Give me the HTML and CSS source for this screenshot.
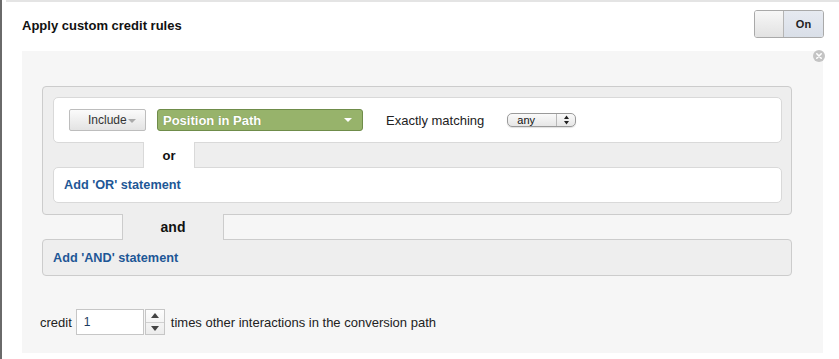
FILE: index.html
```html
<!DOCTYPE html>
<html>
<head>
<meta charset="utf-8">
<link rel="stylesheet" href="styles.css">
</head>
<body>
<div class="page">
  <div class="topbar"></div>
  <div class="header">
    <div class="title">Apply custom credit rules</div>
    <div class="toggle"><span class="toggle-knob"></span><span class="toggle-on">On</span></div>
  </div>
  <div class="panel">
    <span class="close"><svg width="12" height="12" viewBox="0 0 12 12"><circle cx="6" cy="6" r="6" fill="#c4c4c4"/><path d="M3.8 3.8L8.2 8.2M8.2 3.8L3.8 8.2" stroke="#fff" stroke-width="1.6" stroke-linecap="round"/></svg></span>
    <div class="orgroup">
      <div class="wbox rule">
        <div class="btn-include">Include<span class="tri-gray"></span></div>
        <div class="dd-green">Position in Path<span class="tri-white"></span></div>
        <div class="label">Exactly matching</div>
        <div class="sel-any"><span class="sel-text">any</span><span class="sel-arrows"><svg width="7" height="10" viewBox="0 0 7 10"><path d="M3.5 0.5L6 4H1z M3.5 9.5L6 6H1z" fill="#222"/></svg></span></div>
      </div>
      <div class="conn conn-or"><div class="tab tab-or">or</div></div>
      <div class="wbox addor"><a class="link">Add 'OR' statement</a></div>
    </div>
    <div class="conn conn-and"><div class="tab tab-and">and</div></div>
    <div class="andbox"><a class="link">Add 'AND' statement</a></div>
    <div class="credit">
      <span>credit</span>
      <div class="num"><span class="num-val">1</span></div>
      <div class="spin">
        <span class="spin-btn"><svg width="8" height="5" viewBox="0 0 8 5"><path d="M4 0L8 5H0z" fill="#444"/></svg></span>
        <span class="spin-btn"><svg width="8" height="5" viewBox="0 0 8 5"><path d="M4 5L8 0H0z" fill="#444"/></svg></span>
      </div>
      <span>times other interactions in the conversion path</span>
    </div>
  </div>
</div>
</body>
</html>
```
FILE: styles.css
```css
* { box-sizing: border-box; }
html, body { margin: 0; padding: 0; background: #fff; }
body { font-family: "Liberation Sans", Arial, sans-serif; color: #222; }
.page {
  width: 839px;
  height: 359px;
  border-left: 2px solid #6a6a6a;
  overflow: hidden;
}
.topbar { height: 2px; background: #e4e4e4; margin-left: 4px; }
.header {
  display: flex;
  align-items: center;
  justify-content: space-between;
  padding: 8px 15px 0 20px;
  height: 36px;
}
.title { font-weight: bold; font-size: 13px; color: #111; padding-top: 2px; }
.toggle {
  display: flex;
  width: 70px;
  height: 28px;
  border: 1px solid #a9a9a9;
  border-radius: 3px;
  overflow: hidden;
}
.toggle-knob {
  width: 29px;
  background: linear-gradient(#f7f7f7, #e2e2e2);
  border-right: 1px solid #b5b5b5;
}
.toggle-on {
  flex: 1;
  display: flex;
  align-items: center;
  justify-content: center;
  background: linear-gradient(#e6eaf1, #d9dfe8);
  font-size: 11px;
  font-weight: bold;
  color: #222;
}
.panel {
  position: relative;
  margin: 13px 16px 0 20px;
  width: 801px;
  height: 302px;
  background: #f6f6f6;
  padding: 35px 31px 0 20px;
}
.close { position: absolute; right: -2px; top: -1px; line-height: 0; }
.orgroup {
  background: #eeeeee;
  border: 1px solid #cccccc;
  border-radius: 4px;
  padding: 10px 9px 11px 10px;
}
.wbox {
  background: #fff;
  border: 1px solid #d9d9d9;
  border-radius: 5px;
}
.rule {
  height: 46px;
  display: flex;
  align-items: center;
  padding-left: 15px;
}
.btn-include {
  width: 77px;
  height: 22px;
  border: 1px solid #bdbdbd;
  border-radius: 2px;
  background: linear-gradient(#fbfbfb, #e3e3e3);
  font-size: 12px;
  color: #333;
  display: flex;
  align-items: center;
  padding-left: 18px;
}
.tri-gray {
  display: inline-block;
  width: 0; height: 0;
  border-left: 4px solid transparent;
  border-right: 4px solid transparent;
  border-top: 4px solid #aaa;
  margin-left: 1px;
  margin-top: 1px;
}
.dd-green {
  margin-left: 11px;
  width: 206px;
  height: 22px;
  background: #97b36b;
  border: 1px solid #6f8c4a;
  border-radius: 3px;
  color: #fff;
  font-weight: bold;
  font-size: 13px;
  display: flex;
  align-items: center;
  justify-content: space-between;
  padding: 0 10px 0 5px;
  text-shadow: 0 0 1px rgba(60,80,30,0.4);
}
.tri-white {
  width: 0; height: 0;
  border-left: 4px solid transparent;
  border-right: 4px solid transparent;
  border-top: 4px solid #fff;
}
.label { margin-left: 23px; font-size: 13px; color: #222; }
.sel-any {
  margin-left: 23px;
  width: 69px;
  height: 14px;
  border: 1px solid #9a9a9a;
  border-radius: 5px;
  background: linear-gradient(#fafafa, #e6e6e6);
  display: flex;
  align-items: center;
  font-size: 11px;
  color: #111;
  box-shadow: 0 1px 1px rgba(0,0,0,0.12);
}
.sel-text { flex: 1; padding-left: 9px; }
.sel-arrows {
  width: 19px;
  height: 100%;
  border-left: 1px solid #b8b8b8;
  display: flex;
  align-items: center;
  justify-content: center;
}
.conn {
  position: relative;
  z-index: 1;
  height: 26px;
  margin: -1px 0;
  display: flex;
}
.tab {
  display: flex;
  align-items: center;
  justify-content: center;
  font-weight: bold;
  color: #111;
}
.tab-or {
  margin-left: 90px;
  width: 52px;
  background: #fff;
  border-left: 1px solid #d9d9d9;
  border-right: 1px solid #d9d9d9;
  font-size: 13px;
}
.tab-and {
  margin-left: 80px;
  width: 102px;
  background: #eeeeee;
  border-left: 1px solid #cccccc;
  border-right: 1px solid #cccccc;
  font-size: 14px;
}
.addor {
  height: 36px;
  display: flex;
  align-items: center;
  padding-left: 10px;
}
.link { color: #1e5796; font-weight: bold; font-size: 12.7px; }
.andbox {
  height: 37px;
  background: #eeeeee;
  border: 1px solid #cccccc;
  border-radius: 4px;
  display: flex;
  align-items: center;
  padding-left: 10px;
}
.credit {
  margin-top: 33px;
  margin-left: -2px;
  display: flex;
  align-items: center;
  font-size: 13px;
  color: #222;
}
.num {
  margin-left: 4px;
  width: 68px;
  height: 26px;
  border: 1px solid #c6c6c6;
  background: #fff;
  display: flex;
  align-items: center;
  padding-left: 7px;
  font-size: 12px;
  color: #1c3a60;
}
.spin {
  margin-left: 1px;
  width: 20px;
  height: 26px;
  display: flex;
  flex-direction: column;
  border: 1px solid #c6c6c6;
  background: linear-gradient(#fdfdfd, #ececec);
  margin-right: 6px;
}
.spin-btn {
  flex: 1;
  display: flex;
  align-items: center;
  justify-content: center;
}
.spin-btn + .spin-btn { border-top: 1px solid #d0d0d0; }
```
